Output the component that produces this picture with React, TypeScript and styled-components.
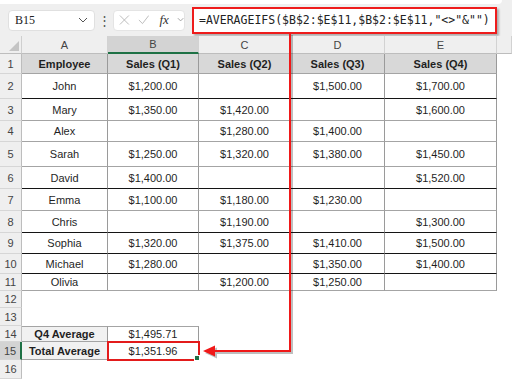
import { Fragment } from "react";
import styled, { createGlobalStyle } from "styled-components";

const GlobalStyle = createGlobalStyle`
  html, body {
    margin: 0;
    padding: 0;
    background: #ffffff;
  }
  body {
    font-family: "Liberation Sans", Arial, sans-serif;
  }
`;

const Page = styled.div`
  position: relative;
  width: 512px;
  height: 379px;
  overflow: hidden;
  background: #ffffff;
`;

const FormulaBar = styled.div`
  height: 36px;
  background: #efefef;
  display: flex;
  flex-direction: column;
`;

const Lip = styled.div`
  height: 4px;
  margin-right: 10px;
  background: #ffffff;
  border-radius: 0 0 6px 0;
`;

const BarRow = styled.div`
  flex: 1;
  display: flex;
  align-items: center;
  padding-left: 8px;
`;

const NameBox = styled.div`
  box-sizing: border-box;
  width: 87px;
  height: 21px;
  background: #ffffff;
  border: 1px solid #e0e0e0;
  border-radius: 4px;
  display: flex;
  align-items: center;
  justify-content: space-between;
  padding: 0 6px 0 6px;
  font-family: "Liberation Serif", "Times New Roman", serif;
  font-size: 12px;
  color: #222;
`;

const Dots = styled.div`
  width: 18px;
  text-align: center;
  font-size: 13px;
  color: #555;
`;

const FxBox = styled.div`
  box-sizing: border-box;
  width: 72px;
  height: 21px;
  margin-right: 7px;
  background: #ffffff;
  border: 1px solid #e4e4e4;
  border-radius: 4px;
  display: flex;
  align-items: center;
  gap: 8px;
  padding-left: 5px;
`;

const Fx = styled.span`
  font-family: "Liberation Serif", "Times New Roman", serif;
  font-style: italic;
  font-size: 13px;
  color: #333;
  margin-left: 2px;
`;

const FormulaBox = styled.div`
  box-sizing: border-box;
  width: 305px;
  height: 27px;
  background: #ffffff;
  border: 2px solid #ee1c1c;
  box-shadow: 2px 2px 2px rgba(0, 0, 0, 0.28);
  display: flex;
  align-items: center;
  padding-left: 5px;
  font-family: "DejaVu Sans Mono", "Liberation Mono", monospace;
  font-size: 11.5px;
  color: #222;
  white-space: pre;
`;

const Sheet = styled.div`
  display: grid;
  grid-template-columns: 22px 86px 91px 92px 94px 112px 15px;
  grid-template-rows: 18px 20px 25px 22px 21px 25px 22px 22px 22px 21px 20px 17px 17px 18px 16px 18px 19px;
`;

const Corner = styled.div`
  box-sizing: border-box;
  background: #efefef;
  border-right: 1px solid #cfcfcf;
  border-bottom: 1px solid #bdbdbd;
  position: relative;
`;

const CornerMark = styled.svg`
  position: absolute;
  right: 2px;
  bottom: 2px;
`;

const ColHead = styled.div<{ $selected?: boolean }>`
  box-sizing: border-box;
  background: ${(p) => (p.$selected ? "#d3d3d3" : "#efefef")};
  border-right: 1px solid #d2d2d2;
  border-bottom: ${(p) => (p.$selected ? "2px solid #1e7145" : "1px solid #bdbdbd")};
  display: flex;
  align-items: center;
  justify-content: center;
  font-size: 11px;
  color: #444;
`;

const RowHead = styled.div<{ $selected?: boolean }>`
  box-sizing: border-box;
  background: ${(p) => (p.$selected ? "#d3d3d3" : "#efefef")};
  border-right: ${(p) => (p.$selected ? "2px solid #1e7145" : "1px solid #bdbdbd")};
  border-bottom: 1px solid #d6d6d6;
  display: flex;
  align-items: center;
  justify-content: center;
  font-size: 11px;
  color: #444;
`;

const TableCell = styled.div<{ $line: "dark" | "light"; $head?: boolean }>`
  box-sizing: border-box;
  background: ${(p) => (p.$head ? "#d8d8d8" : "#ffffff")};
  border-right: 1px solid #9a9a9a;
  border-bottom: 1px solid ${(p) => (p.$line === "dark" ? "#141414" : "#a4a4a4")};
  display: flex;
  align-items: center;
  justify-content: center;
  font-size: 11px;
  font-weight: ${(p) => (p.$head ? 700 : 400)};
  color: #1f1f1f;
`;

const Blank = styled.div<{ $span?: number }>`
  grid-column: span ${(p) => p.$span ?? 1};
  background: #ffffff;
`;

const SummaryLabel = styled.div<{ $top?: boolean }>`
  box-sizing: border-box;
  background: #f1f1f1;
  border-top: ${(p) => (p.$top ? "1px solid #a4a4a4" : "none")};
  border-right: 1px solid #9a9a9a;
  border-bottom: 1px solid #a4a4a4;
  display: flex;
  align-items: center;
  justify-content: center;
  font-size: 11px;
  font-weight: 700;
  color: #1f1f1f;
  white-space: nowrap;
`;

const SummaryValue = styled.div<{ $top?: boolean; $selected?: boolean }>`
  position: relative;
  box-sizing: border-box;
  background: #ffffff;
  border-top: ${(p) => (p.$top ? "1px solid #a4a4a4" : "none")};
  border-right: 1px solid #9a9a9a;
  border-bottom: 1px solid #a4a4a4;
  outline: ${(p) => (p.$selected ? "2px solid #e31b1b" : "none")};
  outline-offset: -1px;
  display: flex;
  align-items: center;
  justify-content: center;
  font-size: 11px;
  color: #1f1f1f;
`;

const Handle = styled.span`
  position: absolute;
  right: -2px;
  bottom: -2px;
  width: 4px;
  height: 4px;
  background: #1e7145;
  border: 1px solid #ffffff;
`;

const Overlay = styled.svg`
  position: absolute;
  left: 0;
  top: 0;
  pointer-events: none;
`;

type Line = "dark" | "light";

const header = ["Employee", "Sales (Q1)", "Sales (Q2)", "Sales (Q3)", "Sales (Q4)"];

const rows: { cells: string[]; line: Line }[] = [
  { cells: ["John", "$1,200.00", "", "$1,500.00", "$1,700.00"], line: "dark" },
  { cells: ["Mary", "$1,350.00", "$1,420.00", "", "$1,600.00"], line: "light" },
  { cells: ["Alex", "", "$1,280.00", "$1,400.00", ""], line: "light" },
  { cells: ["Sarah", "$1,250.00", "$1,320.00", "$1,380.00", "$1,450.00"], line: "light" },
  { cells: ["David", "$1,400.00", "", "", "$1,520.00"], line: "dark" },
  { cells: ["Emma", "$1,100.00", "$1,180.00", "$1,230.00", ""], line: "light" },
  { cells: ["Chris", "", "$1,190.00", "", "$1,300.00"], line: "dark" },
  { cells: ["Sophia", "$1,320.00", "$1,375.00", "$1,410.00", "$1,500.00"], line: "dark" },
  { cells: ["Michael", "$1,280.00", "", "$1,350.00", "$1,400.00"], line: "dark" },
  { cells: ["Olivia", "", "$1,200.00", "$1,250.00", ""], line: "light" },
];

const Chevron = () => (
  <svg width="10" height="6" viewBox="0 0 10 6">
    <path d="M1 1 L5 5 L9 1" fill="none" stroke="#555" strokeWidth="1" />
  </svg>
);

export default function App() {
  return (
    <Page>
      <GlobalStyle />
      <FormulaBar>
        <Lip />
        <BarRow>
          <NameBox>
            <span>B15</span>
            <Chevron />
          </NameBox>
          <Dots>⋮</Dots>
          <FxBox>
            <svg width="12" height="12" viewBox="0 0 12 12">
              <path d="M1 1 L11 11 M11 1 L1 11" stroke="#b5b5b5" strokeWidth="1" />
            </svg>
            <svg width="13" height="12" viewBox="0 0 13 12">
              <path d="M1 6 L5 10 L12 1" fill="none" stroke="#b5b5b5" strokeWidth="1" />
            </svg>
            <Fx>fx</Fx>
            <svg width="8" height="6" viewBox="0 0 8 6">
              <path d="M1 1 L4 4 L7 1" fill="none" stroke="#999" strokeWidth="1" />
            </svg>
          </FxBox>
          <FormulaBox>{'=AVERAGEIFS($B$2:$E$11,$B$2:$E$11,"<>"&"")'}</FormulaBox>
        </BarRow>
      </FormulaBar>

      <Sheet>
        <Corner>
          <CornerMark width="10" height="10" viewBox="0 0 10 10">
            <path d="M10 0 L10 10 L0 10 Z" fill="#c4c4c4" />
          </CornerMark>
        </Corner>
        {["A", "B", "C", "D", "E"].map((c) => (
          <ColHead key={c} $selected={c === "B"}>
            {c}
          </ColHead>
        ))}
        <ColHead />

        <RowHead>1</RowHead>
        {header.map((h) => (
          <TableCell key={h} $line="light" $head>
            {h}
          </TableCell>
        ))}
        <Blank />

        {rows.map((r, i) => (
          <Fragment key={i}>
            <RowHead>{i + 2}</RowHead>
            {r.cells.map((c, j) => (
              <TableCell key={j} $line={r.line}>
                {c}
              </TableCell>
            ))}
            <Blank />
          </Fragment>
        ))}

        <RowHead>12</RowHead>
        <Blank $span={6} />
        <RowHead>13</RowHead>
        <Blank $span={6} />

        <RowHead>14</RowHead>
        <SummaryLabel $top>Q4 Average</SummaryLabel>
        <SummaryValue $top>$1,495.71</SummaryValue>
        <Blank $span={4} />

        <RowHead $selected>15</RowHead>
        <SummaryLabel>Total Average</SummaryLabel>
        <SummaryValue $selected>
          $1,351.96
          <Handle />
        </SummaryValue>
        <Blank $span={4} />

        <RowHead>16</RowHead>
        <Blank $span={6} />
      </Sheet>

      <Overlay width="512" height="379" viewBox="0 0 512 379">
        <g opacity="0.25" transform="translate(2 2)">
          <path d="M290 33 V351 H214" fill="none" stroke="#000" strokeWidth="2" />
          <path d="M203 351 L215 345.5 L215 356.5 Z" fill="#000" />
        </g>
        <path d="M290 33 V351 H214" fill="none" stroke="#f01818" strokeWidth="2" />
        <path d="M203 351 L215 345.5 L215 356.5 Z" fill="#f01818" />
      </Overlay>
    </Page>
  );
}
